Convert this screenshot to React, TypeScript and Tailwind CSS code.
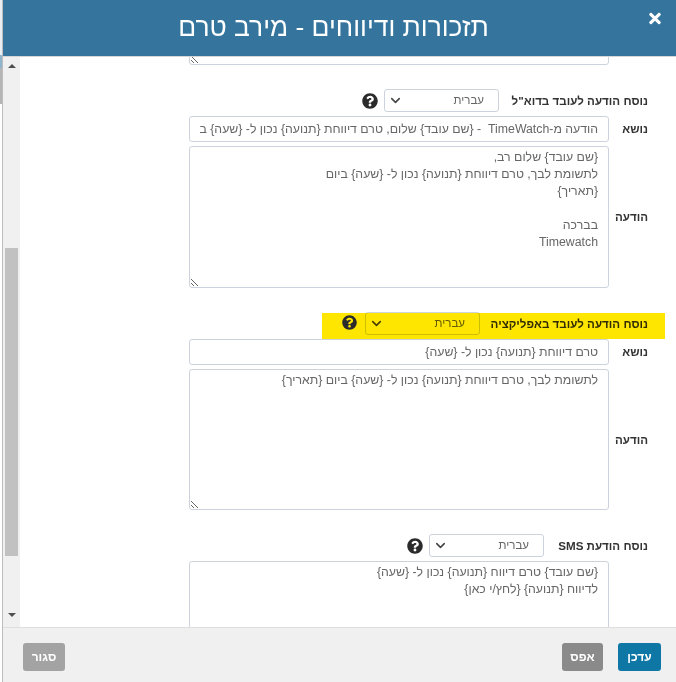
import { ChevronDown } from 'lucide-react';
import { FaQuestionCircle, FaTimes } from 'react-icons/fa';

const font = { fontFamily: '"Liberation Sans", Arial, sans-serif' };

function LangRow({ label, labelWidth, highlight }: { label: string; labelWidth: string; highlight?: boolean }) {
  return (
    <div className="relative flex h-[23px] items-center">
      {highlight && <div className="absolute left-[302px] -right-[17px] top-px h-[26px] bg-[#ffe600] mix-blend-multiply" />}
      <span className={`${labelWidth} shrink-0 text-[11.6px] font-bold text-[#333]`}>{label}</span>
      <div className="flex h-[23px] w-[115px] items-center justify-between rounded-[3px] border border-[#ccd3dc] bg-white pl-[3px] pr-[14px] text-[11.5px] text-[#666]">
        <span>עברית</span>
        <ChevronDown className="h-[15px] w-[15px] text-[#444]" strokeWidth={2.5} />
      </div>
      <FaQuestionCircle className={highlight ? 'mr-[8px] h-[15px] w-[15px] -translate-y-px text-[#2b2b2b]' : 'mr-[6px] h-[16px] w-[16px] text-[#2b2b2b]'} />
    </div>
  );
}

function Field({ label, children, center }: { label?: string; children: React.ReactNode; center?: boolean }) {
  return (
    <div className={`flex ${center ? 'items-center' : 'items-start'}`}>
      <div className="w-[39px] shrink-0 text-[11.6px] font-bold leading-[26px] text-[#333]">{label}</div>
      {children}
    </div>
  );
}

function Subject({ value }: { value: string }) {
  return (
    <input
      readOnly
      value={value}
      dir="rtl"
      className="h-[26px] w-[420px] rounded-[3px] border border-[#ccd3dc] bg-white px-[10px] text-[12.3px] text-[#666] outline-none"
    />
  );
}

function Message({ value, height }: { value: string; height: string }) {
  return (
    <textarea
      readOnly
      defaultValue={value}
      dir="rtl"
      className={`${height} block w-[420px] rounded-[3px] border border-[#ccd3dc] bg-white px-[10px] py-[2px] text-[12.3px] leading-[17px] text-[#666] outline-none`}
    />
  );
}

export default function App() {
  return (
    <div style={font} className="flex h-[682px] w-[676px] overflow-hidden bg-white">
      <div className="flex w-[2px] shrink-0 flex-col">
        <div className="h-[55px] bg-[#e8eef2]" />
        <div className="h-[13px] bg-[#8fb5cc]" />
        <div className="h-[36px] bg-[#b5b5b5]" />
      </div>
      <div className="w-px shrink-0 bg-[#bdbdbd]" />
      <div className="flex min-w-0 flex-1 flex-col">
        <header className="relative flex h-[57px] shrink-0 items-center justify-center border-b border-[#d6d6d6] bg-[#35759d] pb-[2px] pr-[12px] text-white" dir="rtl">
          <h1 className="text-[26.4px] leading-none">תזכורות ודיווחים - מירב טרם</h1>
          <FaTimes className="absolute right-[15px] top-[10px] h-[17px] w-[12px]" />
        </header>
        <div className="flex min-h-0 flex-1">
          <div className="flex w-[17px] shrink-0 flex-col items-center bg-[#f0f0f0] pt-[7px]">
            <div className="h-0 w-0 border-x-[4px] border-b-[4px] border-x-transparent border-b-[#505050]" />
            <div className="mt-[180px] h-[308px] w-[13px] bg-[#c1c1c1]" />
            <div className="mt-[57px] h-0 w-0 border-x-[4px] border-t-[4px] border-x-transparent border-t-[#505050]" />
          </div>
          <main className="min-w-0 flex-1 overflow-hidden pr-[28px]" dir="rtl">
            <div className="-mt-[93px]">
              <div className="mr-[39px]"><Message value="" height="h-[101px]" /></div>

              <div className="mt-[24px]">
                <LangRow label={'נוסח הודעה לעובד בדוא"ל'} labelWidth="w-[149px]" />
              </div>
              <div className="mt-[4px]">
                <Field label="נושא">
                  <Subject value="הודעה מ-TimeWatch  - {שם עובד} שלום, טרם דיווחת {תנועה} נכון ל- {שעה} ב" />
                </Field>
              </div>
              <div className="mt-[4px]">
                <Field label="הודעה" center>
                  <Message
                    height="h-[142px]"
                    value={'{שם עובד} שלום רב,\nלתשומת לבך, טרם דיווחת {תנועה} נכון ל- {שעה} ביום\n{תאריך}\n\nבברכה\nTimewatch'}
                  />
                </Field>
              </div>

              <div className="mt-[24px]">
                <LangRow label="נוסח הודעה לעובד באפליקציה" labelWidth="w-[168px]" highlight />
              </div>
              <div className="mt-[4px]">
                <Field label="נושא">
                  <Subject value="טרם דיווחת {תנועה} נכון ל- {שעה}" />
                </Field>
              </div>
              <div className="mt-[4px]">
                <Field label="הודעה" center>
                  <Message height="h-[141px]" value="לתשומת לבך, טרם דיווחת {תנועה} נכון ל- {שעה} ביום {תאריך}" />
                </Field>
              </div>

              <div className="mt-[24px]">
                <LangRow label="נוסח הודעת SMS" labelWidth="w-[104px]" />
              </div>
              <div className="mr-[39px] mt-[4px]">
                <Message height="h-[120px]" value={'{שם עובד} טרם דיווח {תנועה} נכון ל- {שעה}\nלדיווח {תנועה} {לחץ/י כאן}'} />
              </div>
            </div>
          </main>
        </div>
        <footer className="flex h-[55px] shrink-0 items-start border-t border-[#dedede] bg-[#f0f0f0] pt-[15px] pl-[20px] pr-[15px]" dir="rtl">
          <button className="h-[28px] w-[43px] rounded-[3px] bg-[#0f77a5] text-[12px] font-bold text-white">עדכן</button>
          <button className="mr-[15px] h-[28px] w-[41px] rounded-[3px] bg-[#8a8a8a] text-[12px] font-bold text-white">אפס</button>
          <button className="mr-auto h-[28px] w-[42px] rounded-[3px] bg-[#a3a3a3] text-[12px] font-bold text-white">סגור</button>
        </footer>
      </div>
    </div>
  );
}
